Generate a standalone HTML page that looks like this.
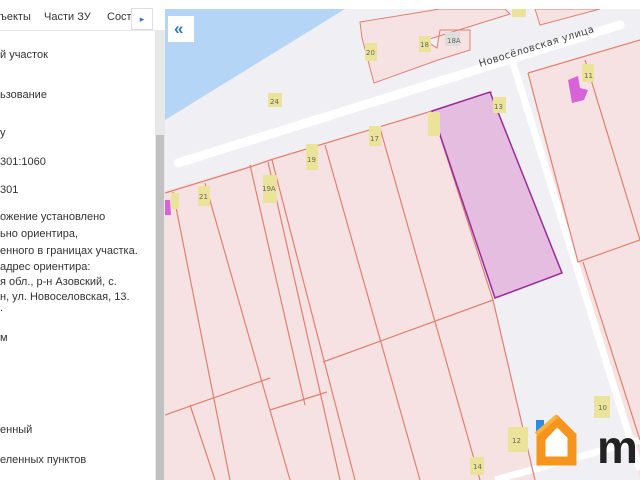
<!DOCTYPE html>
<html><head><meta charset="utf-8"><style>
body{margin:0;width:640px;height:480px;overflow:hidden;background:#fff;font-family:"Liberation Sans",sans-serif;position:relative}
.p{position:absolute;left:0;top:0;width:155px;height:480px;background:#fff;overflow:hidden}
.t{position:absolute;font-size:11px;color:#333;white-space:nowrap;left:0}
.sb{position:absolute;left:155px;top:30px;width:10px;height:450px;background:#e8e8e8}
.sbt{position:absolute;left:156px;top:135px;width:8px;height:345px;background:#c1c1c1}
</style></head><body>
<svg style="position:absolute;left:165px;top:9px" width="475" height="471" viewBox="165 9 475 471">
<rect x="165" y="9" width="475" height="471" fill="#f0eff4"/>
<polygon points="165,9 345,9 165,120" fill="#b5d5f7"/>
<polygon points="165,191 432,111 493,300 535,480 165,480" fill="#f7e2e3"/>
<polygon points="528,73 640,40 640,480 575,270" fill="#f7e2e3"/>
<polygon points="360,22 440,9 505,9 510,14 420,42 428,52 425,40 437,48 440,30 470,30 470,50 438,60 374,83 362,38" fill="#f7e2e3" stroke="#e08070" stroke-width="1"/>
<polygon points="535,9 600,9 540,25" fill="#f7e2e3" stroke="#e08070"/>
<line x1="178" y1="163" x2="620" y2="25" stroke="#fff" stroke-width="9" stroke-linecap="round"/>
<line x1="512" y1="60" x2="640" y2="470" stroke="#fff" stroke-width="7"/>
<line x1="495" y1="480" x2="640" y2="440" stroke="#fff" stroke-width="7"/>
<g stroke="#e08070" stroke-width="1.2" fill="none">
<polyline points="165,193 250,167 270,160 432,111 492,92"/>
<line x1="173" y1="192" x2="230" y2="480"/>
<line x1="205" y1="183" x2="290" y2="480"/>
<line x1="250" y1="165" x2="305" y2="405"/>
<line x1="268" y1="162" x2="340" y2="480"/>
<line x1="272" y1="160" x2="355" y2="480"/>
<line x1="325" y1="145" x2="420" y2="480"/>
<line x1="380" y1="128" x2="480" y2="480"/>
<line x1="432" y1="111" x2="493" y2="300"/>
<line x1="493" y1="300" x2="535" y2="480"/>
<line x1="323" y1="362" x2="493" y2="300"/>
<line x1="165" y1="415" x2="270" y2="378"/>
<line x1="270" y1="410" x2="327" y2="392"/>
<line x1="190" y1="405" x2="215" y2="480"/>
<line x1="528" y1="73" x2="578" y2="262"/>
<line x1="528" y1="73" x2="640" y2="40"/>
<line x1="585" y1="60" x2="640" y2="240"/>
<line x1="578" y1="262" x2="640" y2="240"/>
<line x1="583" y1="262" x2="640" y2="440"/>
</g>
<polygon points="432,111 490,92 562,273 495,298" fill="#e4bde0" stroke="#9a2a9a" stroke-width="1.5"/>
<polygon points="568,80 578,76 580,88 588,90 584,100 572,103" fill="#d863d8"/>
<polygon points="165,200 170,200 171,215 165,215" fill="#d863d8"/>
<rect x="536" y="420" width="8" height="12" fill="#2a8ee0"/>
<g fill="#ece39a">
<rect x="268" y="93" width="14" height="14"/><rect x="365" y="43" width="12" height="18"/><rect x="419" y="36" width="12" height="16"/>
<rect x="512" y="3" width="14" height="14"/><rect x="493" y="97" width="13" height="16"/><rect x="369" y="126" width="12" height="20"/>
<rect x="306" y="144" width="12" height="26"/><rect x="263" y="175" width="14" height="28"/><rect x="198" y="186" width="12" height="20"/>
<rect x="171" y="193" width="8" height="16"/><rect x="428" y="112" width="12" height="24"/><rect x="582" y="64" width="12" height="18"/>
<rect x="594" y="396" width="16" height="22"/><rect x="508" y="427" width="20" height="25"/><rect x="470" y="457" width="14" height="18"/>
</g>
<rect x="445" y="32" width="15" height="14" fill="#ddd"/>
<g font-family="DejaVu Sans,sans-serif" font-size="7" fill="#666">
<text x="270" y="104">24</text><text x="366" y="55">20</text><text x="420" y="47">18</text><text x="447" y="43">18A</text>
<text x="494" y="109">13</text><text x="370" y="141">17</text><text x="307" y="162">19</text><text x="262" y="191">19A</text>
<text x="199" y="199">21</text><text x="598" y="410">10</text><text x="512" y="443">12</text><text x="473" y="469">14</text><text x="584" y="78">11</text>
</g>
<text x="0" y="0" transform="translate(480,67) rotate(-17)" font-family="DejaVu Sans,sans-serif" font-size="10" fill="#444" letter-spacing="0.3">Новосёловская  улица</text>
<path d="M541,438 L557,421 L572,436 L572,461 L541,461 Z" fill="#fff" stroke="#f7941d" stroke-width="9" stroke-linejoin="miter"/>
<path d="M536,434 L557,416" stroke="#fbb040" stroke-width="4"/>
<text x="597" y="463" font-family="Liberation Sans,sans-serif" font-weight="bold" font-size="46" fill="#222">m</text>
<rect x="168" y="16" width="26" height="26" fill="#fff"/>
<text x="174" y="34" font-size="17" font-weight="bold" fill="#2a78c8" font-family="Liberation Sans,sans-serif">«</text>
</svg>
<div style="position:absolute;left:165px;top:0;width:475px;height:9px;background:#fff"></div>
<div class="p">
<div style="position:absolute;left:0;top:0;width:155px;height:30px;border-bottom:1px solid #e6e6e6"></div>
<div class="t" style="top:11px;left:0">ъекты</div>
<div class="t" style="top:11px;left:44px">Части ЗУ</div>
<div class="t" style="top:11px;left:107px">Сості</div>
<div style="position:absolute;left:131px;top:8px;width:20px;height:20px;border:1px solid #dde;background:#fff;color:#2a78c8;font-size:9px;text-align:center;line-height:20px">▸</div>
<div class="t" style="top:49px">й участок</div>
<div class="t" style="top:89px">ьзование</div>
<div class="t" style="top:127px">у</div>
<div class="t" style="top:156px">301:1060</div>
<div class="t" style="top:184px">301</div>
<div class="t" style="top:211px">ожение установлено</div>
<div class="t" style="top:228px">ьно ориентира,</div>
<div class="t" style="top:245px">енного в границах участка.</div>
<div class="t" style="top:261px">адрес ориентира:</div>
<div class="t" style="top:276px">я обл., р-н Азовский, с.</div>
<div class="t" style="top:291px">н, ул. Новоселовская, 13.</div>
<div class="t" style="top:302px">.</div>
<div class="t" style="top:332px">м</div>
<div class="t" style="top:424px">енный</div>
<div class="t" style="top:454px">еленных пунктов</div>
</div>
<div class="sb"></div><div class="sbt"></div>
</body></html>
